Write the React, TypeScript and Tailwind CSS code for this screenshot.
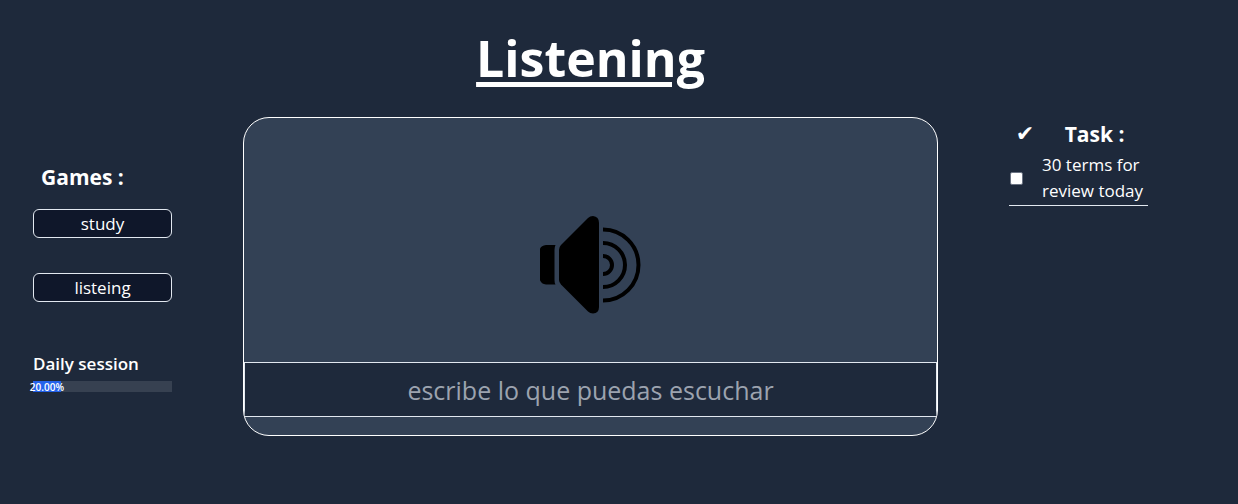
const games = ["study", "listeing"];
const progress = 20;

function SpeakerIcon() {
  return (
    <svg viewBox="0 0 102 98" className="h-[98px] w-[102px]" aria-hidden="true">
      <path d="M6 29H15.500Q14.500 31 14.500 34V64Q14.500 67 15.500 68.500H6Q-0.500 67.500 -0.500 61V36Q-0.500 29.500 6 29Z" />
      <path d="M19 34Q19 31 21 29L48 2Q50 0 53 0Q59 0.500 59 7V91Q59 97 53 97.500Q50 97.500 48 95.500L21 68.500Q19 66.500 19 64Z" />
      <g fill="none" stroke="black" strokeWidth="4">
        <path d="M63 40A9 9 0 0 1 63 58" />
        <path d="M63 27A22 22 0 0 1 63 71" />
        <path d="M63 13.500A35.500 35.500 0 0 1 63 84.500" />
      </g>
    </svg>
  );
}

function GamesPanel() {
  return (
    <nav className="flex min-w-0 flex-col pt-[44px]">
      <h2 className="pl-2 text-[21px] leading-8 font-bold">Games :</h2>
      <div className="mt-4 flex flex-col gap-[35px]">
        {games.map((game) => (
          <button
            key={game}
            type="button"
            className="h-[29px] rounded-md border border-[#e2e8f0] bg-[#0f172a] text-[17px] leading-6"
          >
            {game}
          </button>
        ))}
      </div>
      <h3 className="mt-[50px] text-[17px] leading-6 font-semibold whitespace-nowrap">
        Daily session
      </h3>
      <div className="mt-[5px] h-[11px] bg-[#374151]">
        <div
          className="flex h-full items-center justify-center bg-[#2563eb] text-[10px] leading-none font-semibold"
          style={{ width: `${progress}%` }}
        >
          <span>{progress.toFixed(2)}%</span>
        </div>
      </div>
    </nav>
  );
}

function ListeningCard() {
  return (
    <section className="flex min-w-0 flex-col overflow-hidden rounded-[26px] border border-white bg-[#334155] pb-[18px]">
      <div className="flex justify-center pt-[98px] pb-12">
        <button type="button" aria-label="Play audio">
          <SpeakerIcon />
        </button>
      </div>
      <input
        type="text"
        aria-label="escribe lo que puedas escuchar"
        placeholder="escribe lo que puedas escuchar"
        className="h-[55px] w-full border border-[#e2e8f0] bg-[#1e293b] text-center text-[25px] placeholder:text-[#9ca3af]"
      />
    </section>
  );
}

function TaskPanel() {
  return (
    <aside className="min-w-0">
      <div className="flex items-center pt-px">
        <span className="w-8 text-center font-['DejaVu_Sans'] text-[22px] leading-8 font-bold">
          ✔
        </span>
        <h2 className="flex-1 text-center text-[21px] leading-8 font-bold">Task :</h2>
      </div>
      <div className="flex items-center border-b border-[#e2e8f0] pt-[2px] pb-px">
        <input
          id="review"
          type="checkbox"
          className="ml-px size-[13px] shrink-0 appearance-none rounded-xs border border-gray-500 bg-white checked:bg-blue-600"
        />
        <label htmlFor="review" className="ml-[19px] text-[17px] leading-[26px]">
          30 terms for review today
        </label>
      </div>
    </aside>
  );
}

export default function App() {
  return (
    <main className="min-h-screen bg-[#1e293b] pr-[90px] pl-[33px] font-['Open_Sans','Noto_Sans',sans-serif] text-white">
      <h1 className="px-[142px] pt-[22px] pb-[23px] text-center text-[50px] leading-[72px] font-bold underline decoration-[5px] underline-offset-[5px]">
        Listening
      </h1>
      <div className="grid grid-cols-[1fr_5fr_1fr] items-start gap-x-[71px]">
        <GamesPanel />
        <ListeningCard />
        <TaskPanel />
      </div>
    </main>
  );
}
